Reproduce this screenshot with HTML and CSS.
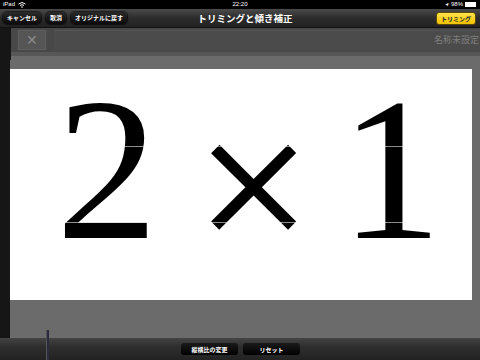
FILE: index.html
```html
<!DOCTYPE html>
<html lang="ja">
<head>
<meta charset="utf-8">
<link rel="stylesheet" href="styles.css">
</head>
<body>
<div class="screen">
  <div class="status">
    <div class="st-left">iPad <svg class="wifi" width="8" height="6" viewBox="0 0 8 6"><path d="M0.5 2 Q4 -1 7.5 2" stroke="#fff" fill="none" stroke-width="1"/><path d="M2 3.5 Q4 1.8 6 3.5" stroke="#fff" fill="none" stroke-width="1"/><circle cx="4" cy="5" r="0.8" fill="#fff"/></svg></div>
    <div class="st-center">22:20</div>
    <div class="st-right"><span class="arrow">➤</span> 98% <span class="battery"><span class="battery-fill"></span></span></div>
  </div>
  <div class="navbar">
    <div class="nav-left">
      <button class="nbtn">キャンセル</button>
      <button class="nbtn">取消</button>
      <button class="nbtn">オリジナルに戻す</button>
    </div>
    <div class="title">トリミングと傾き補正</div>
    <button class="ybtn">トリミング</button>
  </div>
  <div class="main">
    <div class="leftstrip"></div>
    <div class="workspace">
      <div class="toolrow">
        <div class="xbtn">✕</div>
        <div class="namefield">名称未設定</div>
      </div>
      <div class="band1"></div>
      <div class="band2"></div>
      <div class="canvas">
        <div class="photo">
          <span class="g g2">2</span><span class="g gx">×</span><span class="g g1">1</span>
          <div class="gridline h1"></div>
          <div class="gridline h2"></div>
        </div>
      </div>
    </div>
  </div>
  <div class="toolbar">
    <div class="knob"></div>
    <button class="tbtn">縦横比の変更</button>
    <button class="tbtn">リセット</button>
  </div>
</div>
</body>
</html>
```
FILE: styles.css
```css
* { box-sizing: border-box; }
html, body { margin: 0; padding: 0; background: #000; }
body { font-family: "Liberation Sans", "Noto Sans CJK JP", sans-serif; }
.screen { width: 480px; height: 360px; overflow: hidden; display: flex; flex-direction: column; background: #666; }
.status { height: 9px; flex: none; background: #000; color: #fff; font-size: 6px; line-height: 9px; display: flex; justify-content: space-between; align-items: center; padding: 0 4px 0 3px; position: relative; }
.st-left { display: flex; align-items: center; gap: 3px; }
.st-center { position: absolute; left: 0; right: 0; text-align: center; top: 0; }
.st-right { display: flex; align-items: center; gap: 2px; }
.arrow { font-size: 5px; transform: rotate(-45deg); display: inline-block; }
.battery { width: 11px; height: 5px; border: 1px solid #fff; display: inline-block; padding: 0; }
.battery-fill { display: block; height: 100%; width: 100%; background: #fff; }
.navbar { height: 19px; flex: none; background: linear-gradient(#4a4a4a, #2c2c2c 50%, #222); border-bottom: 1px solid #111; display: flex; align-items: center; padding: 0 4px 0 3px; position: relative; }
.nav-left { display: flex; gap: 5px; }
.nbtn { height: 12px; border: none; border-radius: 4px; background: linear-gradient(#2a2a2a, #0a0a0a); color: #fff; font-family: inherit; font-size: 6px; font-weight: bold; padding: 0 4px; line-height: 12px; box-shadow: 0 0 1px 1px rgba(0,0,0,0.6); }
.title { position: absolute; left: 0; right: 0; text-align: center; color: #fff; font-weight: bold; font-size: 9.5px; pointer-events: none; padding-left: 10px; }
.ybtn { margin-left: auto; height: 13px; border: 1px solid #5a4a10; border-radius: 3px; background: linear-gradient(#ffe34a, #f2c000); color: #222; font-family: inherit; font-size: 6px; font-weight: bold; padding: 0 4px; }
.main { flex: 1; min-height: 0; display: flex; }
.leftstrip { width: 11px; background: #161616; }
.workspace { flex: 1; min-height: 0; display: flex; flex-direction: column; background: #666; }
.toolrow { height: 24px; flex: none; background: #484848; display: flex; align-items: center; gap: 8px; padding-left: 7px; }
.xbtn { width: 28px; height: 20px; background: #555; border: 1px solid #5e5e5e; color: #8a8a8a; font-size: 14px; line-height: 18px; text-align: center; }
.namefield { flex: 1; height: 20px; background: #4b4b4b; border-top: 1px solid #555; color: #7e7e7e; font-size: 9px; line-height: 18px; text-align: right; white-space: nowrap; padding-right: 1px; }
.band1 { height: 4px; flex: none; background: #575757; }
.band2 { height: 4px; flex: none; background: #6b6b6b; }
.canvas { flex: 1; min-height: 0; background: #6b6b6b; padding: 9px 8px 38px 0; margin-left: -1px; display: flex; }
.photo { flex: 1; min-height: 0; background: #fff; position: relative; display: flex; justify-content: flex-start; align-items: flex-end; padding-left: 46px; font-family: "Liberation Serif", serif; font-size: 204px; line-height: 1.12; color: #000; }
.g { display: block; }
.g2 { margin-right: 38px; margin-bottom: 17px; }
.gx { margin-right: 29px; margin-bottom: 0; -webkit-text-stroke: 1.5px #000; }
.g1 { margin-bottom: 17px; }
.gridline { position: absolute; left: 0; right: 0; height: 1px; background: rgba(255,255,255,0.55); }
.h1 { top: 77px; }
.h2 { top: 153px; }
.toolbar { height: 22px; flex: none; background: linear-gradient(#444, #2e2e2e 40%, #222); display: flex; justify-content: center; align-items: center; gap: 5px; position: relative; padding-left: 1px; }
.tbtn { height: 12px; width: 57px; border: none; border-radius: 3px; background: linear-gradient(#1a1a1a, #000); color: #fff; font-family: inherit; font-size: 6px; font-weight: bold; padding: 0; }
.knob { position: absolute; left: 46px; top: -8px; width: 3px; height: 30px; background: #2a2a40; border-left: 1px solid #555; }
```
